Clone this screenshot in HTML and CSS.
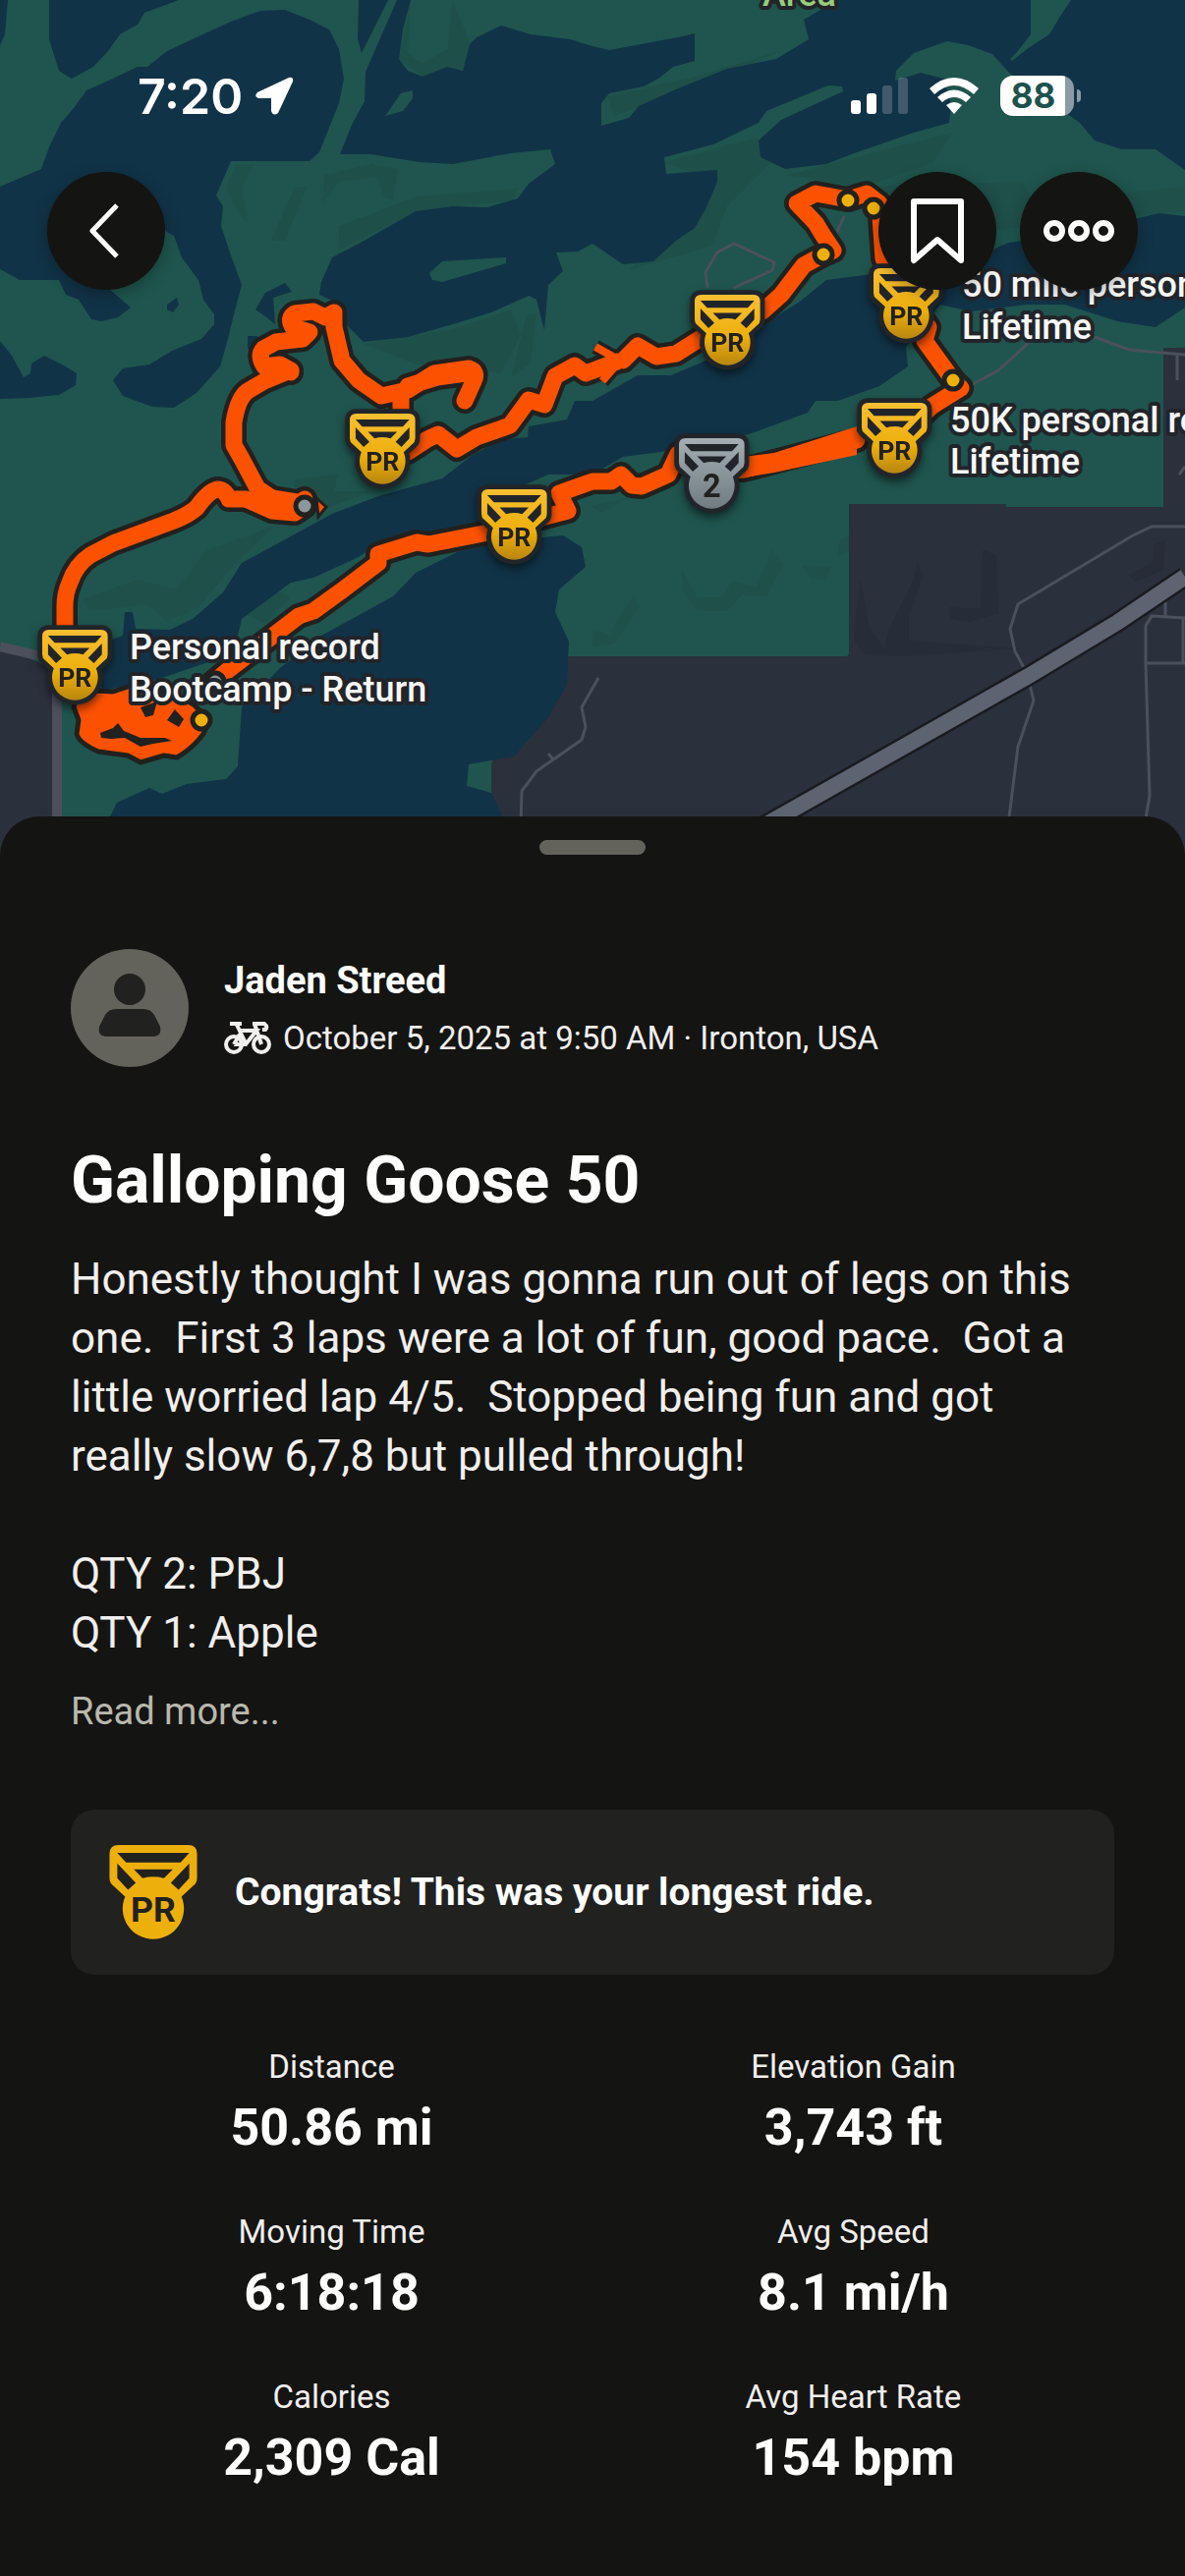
FILE: index.html
```html
<!DOCTYPE html>
<html lang="en">
  <head>
    <meta charset="UTF-8" />
    <meta name="viewport" content="width=device-width, initial-scale=1.0" />
    <title>Galloping Goose 50</title>
    <link rel="stylesheet" href="styles.css">
  </head>
  <body>
    <header class="map">
      <svg class="map-canvas" viewBox="0 0 1206 871" preserveAspectRatio="xMidYMin slice" role="img" aria-label="Ride map">
        <defs>
          <linearGradient id="gold" x1="0" y1="0" x2="0" y2="1">
            <stop offset="0" stop-color="#f8bf33" />
            <stop offset="0.6" stop-color="#edaf0c" />
            <stop offset="1" stop-color="#b9860f" />
          </linearGradient>
          <linearGradient id="silver" x1="0" y1="0" x2="0" y2="1">
            <stop offset="0" stop-color="#a3aeb2" />
            <stop offset="1" stop-color="#717c80" />
          </linearGradient>
          <path id="medal-outline" d="M9 0H81Q90 0 90 9V34Q90 39 86 42L74 53A31.500 31.500 0 1 1 16 53L4 42Q0 39 0 34V9Q0 0 9 0Z" />
          <path id="medal-holes" d="M8 8H82L73 18H17ZM25 25H65L56 34Q45 31 34 34ZM8 19L27 39L19 46L8 34ZM82 19L63 39L71 46L82 34Z" />
        </defs>

        <!-- land -->
        <rect width="1206" height="871" fill="#1f554e" />
        <g class="relief">
          <path d="M418 0L406 60L430 78L471 70L478 42L460 0L456 50L430 64L415 54Z" />
          <path d="M240 168L258 168L246 190L252 228L240 212L230 190ZM300 190L312 190L290 245L276 245ZM330 178L380 166L385 180L345 185L328 208ZM380 168L405 172L400 204L390 200Z" />
          <path d="M345 230L423 200L527 192L520 205L461 210L423 215L345 255Z" />
          <path d="M370 350L461 335L520 315L530 340L510 380L420 370ZM536 320L546 320L540 370L520 385Z" />
          <path d="M618 98L700 80L800 50L690 95L625 118ZM676 165L770 140L790 160L740 210L725 250L640 275L730 185Z" />
          <path d="M800 178L930 145L970 135L950 165L880 190L1040 185L1060 215L1110 200L1206 190L1206 215L1000 235L900 195Z" />
          <path d="M85 610L140 590L180 600L210 560L280 535L240 572L200 620L170 632L150 615L90 622ZM250 625L280 600L295 608L270 635Z" />
          <path d="M300 488L345 482L340 500L380 500L330 518L300 505Z" />
          <path d="M603 515L640 506L612 522ZM603 640L620 646L645 605L650 618L625 655L603 658ZM693 580L710 608L735 608L745 592L770 598L785 560L797 575L780 607L755 605L740 622L710 622L695 602ZM816 575L845 577L840 590L825 590ZM855 550L864 545L864 560L852 568Z" />
        </g>

        <path class="ground" d="M0 658L53 680V871H0ZM500 871V780L520 668H862L864 666V513H1024V516H1184V354H1206V871Z" />
        <g class="ground-relief">
          <path d="M876 590L885 640L900 660L905 640L925 600L934 573L940 586L925 625L925 652L1040 660L920 668L880 666L868 650ZM1000 560L1014 565L1016 625L985 633L968 630L966 618L998 620Z" />
          <path d="M1175 553L1186 550L1184 580L1155 592L1148 585L1172 573Z" />
        </g>

        <!-- water -->
        <g class="water">
          <path d="M0 0H8L5 35L0 46ZM50 0V40L60 72L73 80L95 68L110 52L122 35L140 25L147 13L182 0ZM365 0H395L368 54L364 40Z" />
          <path d="M0 190L42 172L50 150L62 125L75 110L88 92L115 80L140 68H150L170 52L200 38L235 22L265 11L290 10L315 20L335 30L345 50L350 80L345 105L335 130L325 155L315 164H235L220 199L227 210L225 230L235 260L246 290L238 320L232 345L224 373L200 400L177 415L155 414L125 403L115 387L125 375L152 371L175 357L205 345L218 330V320L207 305L202 285L185 262L177 240L168 235L95 280L133 313L120 323L103 327L93 325L80 305L67 300L60 285H20L0 274Z" />
          <path d="M170 310L180 303L182 310L176 318L170 315ZM0 347L12 362L24 384L31 380L32 370L45 362L65 372L78 380L77 392L60 402L30 405L0 406ZM260 315L270 298L290 288L297 297L278 303L280 330L270 322ZM252 342L262 342L262 358L252 355Z" />
          <path d="M418 0L410 30L406 60L415 72L430 78L455 68L471 72L478 45L485 38L510 26L540 35L580 40L603 47L620 51L695 37L707 34V62L685 68L670 80L655 88L620 95L612 105V128L640 120L650 108L690 90L740 70L790 60L823 40L818 20L835 10L850 0H1049V35L1035 53L1028 60L1030 62L1045 50L1068 35L1080 15L1090 0H1206V173L1176 152H1141L1114 143L1099 125L1026 73L1010 55L985 46L964 42L930 54L912 72L911 82L937 74L960 80L968 105L966 125L930 135L872 155L841 167L799 172L774 160L772 143L795 122L858 93L857 88L843 87L780 113L772 125L726 147L676 160L678 177L730 173V185L718 213L707 232L688 245L665 266L634 269L603 248L588 256L566 257L573 276L558 290L554 336L546 305L538 301L500 318L461 330L415 343L370 348L352 330L340 307L325 300L327 287L338 262L365 248L423 215L461 210L496 211L527 202L538 187L565 167L560 152L520 156L461 167L427 165L377 157H346L358 127L371 103L372 73L404 0Z" />
          <path d="M96 657L125 647L127 623H135L138 640L173 641L196 630L227 603L246 573L338 523L385 505L450 487L481 463L511 447L537 445L538 434L577 427L585 408H603L649 382H683L735 360L772 333L814 307L841 285L895 278L957 290L985 265L1026 247L1080 240L1180 217L1206 220V313L1176 333L1137 327L1084 310H1045L988 317L957 310L922 353L924 373L895 393L853 408H830L822 420L795 430L768 440L735 450L672 460L634 465L603 483H558L520 500L480 540L385 553L365 567L319 588L296 593L269 613L246 630L242 647L215 673L165 690L104 703Z" />
          <path d="M465 562L423 583L400 607L327 647L285 680L246 720L242 780L230 793L190 798L165 808L152 802L119 817L112 831V871H511V831L500 807L475 800L477 778L523 770L558 730L577 697L579 653L565 623L569 600L596 577L592 557L573 545L520 550Z" />
        </g>
        <path d="M437 278L450 266L515 262V268L450 287L440 285ZM392 118L408 95L420 92V100L410 113Z" fill="#1f554e" />

        <!-- roads -->
        <g class="road">
          <path d="M1206 536H1172L1153 545L1036 615L1028 640L1033 663L1045 685L1052 713L1036 760L1026 840" />
          <path d="M1186 600V627M1206 629L1172 627L1166 637V675L1170 810L1164 845M1166 675H1206M1204 629V675M1200 483L1206 475" />
          <path d="M609 690L592 720L596 740L592 753L546 785L531 805L530 840M558 767L563 773" />
          <path d="M720 293L718 277L730 257L747 248L788 267L786 275L747 293M849 243L859 220M988 392L1016 377L1049 347M1114 343L1149 356L1206 361M1198 362V387" />
        </g>
        <path class="street" d="M58 871V700M0 658L50 670" />
        <path class="highway-edge" d="M1206 587L1138 633L1045 689L729 868" />
        <path class="highway" d="M1206 587L1138 633L1045 689L729 868" />

        <!-- ride track: dark casing under the orange line -->
        <defs>
          <g id="track">
            <path d="M66 640V617Q66 604 71 593Q77 575 92 565L115 553L177 530Q192 524 200 517Q212 500 221 498Q229 498 233 508H250L277 520L300 522L310 515" />
            <path d="M308 512L277 507L262 497L246 467L238 453V430Q242 405 252 398L269 388L296 377L285 371L269 373Q262 362 268 355L281 348L308 345L315 338L298 333Q292 324 300 319L319 317L331 323L340 318V333L348 367L365 387L388 403L415 397L442 380L477 375Q487 378 482 388L473 408" />
            <path d="M415 393L445 384L474 380M408 405V430M296 379L280 374" />
            <path d="M415 460L435 447L446 442L465 457L485 445L519 433L538 407L554 412L565 383L585 372L596 380L628 368M634 367L649 352L668 363L688 360L715 343L776 317L795 300L818 270L838 259L848 255L838 240L830 227L811 207L830 197L863 203L882 197L895 207L899 263L920 300L945 333L941 347L970 387L978 395L949 413L920 440" />
            <path d="M872 448L788 470L757 478L725 475L690 462L680 483L653 495L643 494L632 483L622 490H603L569 502L578 520L520 535L492 543L436 554L424 552L385 564V573L348 601L319 622L304 627L231 683L205 705" />
            <path d="M310 508L300 520L282 516" />
          </g>
          <path id="direction" d="M613 388L631 367L606 353" />
        </defs>
        <use href="#track" class="track-casing" />
        <use href="#direction" class="arrow-casing" />
        <path d="M80 702L115 704L133 698L180 708L197 717L213 733L207 747Q196 762 180 771L167 769L143 776L130 769L100 765Q80 756 78 747L80 733L75 720Z" fill="#fc5200" stroke="#21211f" stroke-width="5" stroke-linejoin="round" />
        <use href="#track" class="track" />
        <use href="#direction" class="arrow" />
        <path d="M748 466L788 461L872 434V463L788 481L752 487Z" fill="#fc5200" />
        <path d="M102 746L115 741L120 736L126 744L143 751L168 751L175 754L156 757L143 760L127 751L113 752L103 751ZM143 720L160 714L156 728L148 730ZM170 733L178 722L187 732L182 740Z" fill="#21211f" />
        <path d="M322 507L332 516L324 526Z" fill="#fc5200" stroke="#21211f" stroke-width="3" />

        <!-- segment ends -->
        <g class="spot">
          <circle cx="838" cy="259" r="9" />
          <circle cx="863" cy="204" r="9" />
          <circle cx="889" cy="212" r="9" />
          <circle cx="970" cy="387" r="9" />
          <circle cx="205" cy="733" r="9" />
          <circle class="spot-silver" cx="310" cy="515" r="9" />
          <circle class="spot-silver" cx="219" cy="694" r="9" />
        </g>

        <!-- medals -->
        <g id="pin-gold" class="pin" transform="translate(707 300) scale(0.740)">
          <use href="#medal-outline" class="pin-casing" />
          <use href="#medal-outline" fill="url(#gold)" />
          <use href="#medal-holes" fill="#21252a" />
          <text class="pin-text" x="45" y="79">PR</text>
        </g>
        <use href="#pin-gold" x="182" y="-27" />
        <use href="#pin-gold" x="170" y="110" />
        <use href="#pin-gold" x="-351" y="121" />
        <use href="#pin-gold" x="-217" y="198" />
        <use href="#pin-gold" x="-664" y="341" />
        <g class="pin" transform="translate(691 446) scale(0.740)">
          <use href="#medal-outline" class="pin-casing" />
          <use href="#medal-outline" fill="url(#silver)" />
          <use href="#medal-holes" fill="#21252a" />
          <text class="pin-text pin-number" x="45" y="81">2</text>
        </g>

        <!-- labels -->
        <text class="place" x="776" y="6">Area</text>
        <g class="label">
          <text x="132" y="671">Personal record</text>
          <text x="132" y="714">Bootcamp - Return</text>
          <text x="979" y="302">50 mile personal record</text>
          <text x="979" y="345">Lifetime</text>
          <text x="967" y="440">50K personal record</text>
          <text x="967" y="482">Lifetime</text>
        </g>
      </svg>

      <div class="map-overlay">
        <div class="status-bar">
          <div class="status-group">
            <span class="clock">7:20</span>
            <svg width="40" height="40" viewBox="0 0 40 40"><path d="M35 1L3 16Q-1 20 4 22H17V35Q19 41 24 37L39 5Q40 0 35 1Z" fill="#fff" /></svg>
          </div>
          <div class="status-group status-right">
            <svg width="58" height="37" viewBox="0 0 58 37" fill="#fff">
              <rect y="23" width="10" height="14" rx="3" />
              <rect x="16" y="16" width="10" height="21" rx="3" />
              <rect x="32" y="8" width="10" height="29" rx="3" opacity="0.2" />
              <rect x="48" width="10" height="37" rx="3" opacity="0.2" />
            </svg>
            <svg width="50" height="37" viewBox="0 0 50 37" fill="#fff">
              <path d="M0 11Q25-11 50 11L45 17Q25-1 5 17Z" />
              <path d="M8 20Q25 5 42 20L37 25Q25 15 13 25Z" />
              <path d="M17 28Q25 22 33 28L25 37Z" />
            </svg>
            <div class="battery"><span class="battery-level">88</span></div>
          </div>
        </div>
        <nav class="map-actions">
          <button class="round-button" aria-label="Back">
            <svg width="120" height="120" viewBox="0 0 120 120"><path d="M71 34L46 60L71 86" fill="none" stroke="#fff" stroke-width="5" stroke-linejoin="round" /></svg>
          </button>
          <div class="map-actions-right">
            <button class="round-button" aria-label="Save">
              <svg width="120" height="120" viewBox="0 0 120 120"><path d="M36 30H84V90L60 69L36 90Z" fill="none" stroke="#fff" stroke-width="6" stroke-linejoin="round" /></svg>
            </button>
            <button class="round-button" aria-label="More">
              <svg width="120" height="120" viewBox="0 0 120 120" fill="none" stroke="#fff" stroke-width="6"><circle cx="35" cy="60" r="8" /><circle cx="60" cy="60" r="8" /><circle cx="85" cy="60" r="8" /></svg>
            </button>
          </div>
        </nav>
      </div>
    </header>

    <main class="sheet">
      <div class="handle"></div>

      <div class="athlete">
        <svg class="avatar" viewBox="0 0 120 120" role="img" aria-label="Jaden Streed">
          <circle cx="60" cy="60" r="60" fill="#63625b" />
          <circle cx="60" cy="41" r="16" fill="#21211f" />
          <path d="M46 61H74Q81 61 85 67L91 79Q93 88 85 89H35Q27 88 29 79L35 67Q39 61 46 61Z" fill="#21211f" />
        </svg>
        <div class="athlete-info">
          <div class="athlete-name">Jaden Streed</div>
          <div class="activity-meta">
            <svg width="48" height="34" viewBox="0 0 48 34" fill="none" stroke="#f1efed" stroke-width="4">
              <circle cx="10" cy="23" r="8" />
              <circle cx="38" cy="23" r="8" />
              <path d="M6 2H18M13 3L22 22M10 23H22L33 9H16M10 23L17 11M29 2H41Q45 5 42 8H39M31 2L38 23" />
            </svg>
            <span>October 5, 2025 at 9:50 AM · Ironton, USA</span>
          </div>
        </div>
      </div>

      <h1 class="title">Galloping Goose 50</h1>
      <p class="description">Honestly thought I was gonna run out of legs on this one.  First 3 laps were a lot of fun, good pace.  Got a little worried lap 4/5.  Stopped being fun and got really slow 6,7,8 but pulled through!

QTY 2: PBJ
QTY 1: Apple</p>
      <a class="read-more" href="#">Read more...</a>

      <div class="achievement">
        <svg width="90" height="96" viewBox="0 0 90 97">
          <use href="#medal-outline" fill="#edaf0c" />
          <use href="#medal-holes" fill="#21211f" />
          <text class="pin-text" x="45" y="79">PR</text>
        </svg>
        <span>Congrats! This was your longest ride.</span>
      </div>

      <dl class="stats">
        <div class="stat"><dt>Distance</dt><dd>50.86 mi</dd></div>
        <div class="stat"><dt>Elevation Gain</dt><dd>3,743 ft</dd></div>
        <div class="stat"><dt>Moving Time</dt><dd>6:18:18</dd></div>
        <div class="stat"><dt>Avg Speed</dt><dd>8.1 mi/h</dd></div>
        <div class="stat"><dt>Calories</dt><dd>2,309 Cal</dd></div>
        <div class="stat"><dt>Avg Heart Rate</dt><dd>154 bpm</dd></div>
      </dl>
    </main>
  </body>
</html>
```
FILE: styles.css
```css
* {
  box-sizing: border-box;
}
body {
  margin: 0;
  font-family: Roboto, sans-serif;
  background-color: #141412;
  color: #f1efed;
}

/* Map */
.map {
  position: relative;
  height: 871px;
  overflow: hidden;
}
.map-canvas {
  display: block;
  width: 100%;
  height: 100%;
}
.relief {
  fill: #1f4b45;
  opacity: 0.5;
}
.ground {
  fill: #2b303d;
}
.ground-relief {
  fill: #262b37;
  opacity: 0.7;
}
.water {
  fill: #113347;
}
.road {
  fill: none;
  stroke: #4b505c;
  stroke-width: 3;
}
.street {
  fill: none;
  stroke: #4b505c;
  stroke-width: 10;
}
.highway-edge {
  fill: none;
  stroke: #191b1e;
  stroke-width: 21;
}
.highway {
  fill: none;
  stroke: #5d6370;
  stroke-width: 16;
}
.track,
.track-casing {
  fill: none;
  stroke: #fc5200;
  stroke-width: 17;
  stroke-linejoin: round;
  stroke-linecap: round;
}
.track-casing {
  stroke: #21211f;
  stroke-width: 26;
}
.arrow,
.arrow-casing {
  fill: none;
  stroke: #fc5200;
  stroke-width: 8;
}
.arrow-casing {
  stroke: #21211f;
  stroke-width: 15;
}
.spot circle {
  fill: #edaf0c;
  stroke: #21211f;
  stroke-width: 5;
}
.spot .spot-silver {
  fill: #8c979b;
}
.pin {
  filter: drop-shadow(0 6px 6px rgba(0, 0, 0, 0.5));
}
.pin-casing {
  fill: #21252a;
  stroke: #21252a;
  stroke-width: 13;
  stroke-linejoin: round;
}
.pin-text {
  font-size: 36px;
  font-weight: bold;
  text-anchor: middle;
  fill: #21211f;
}
.pin-number {
  font-size: 44px;
}
.label,
.place {
  font-size: 36px;
  font-weight: 500;
  fill: #f8f8f8;
  stroke: #21252a;
  stroke-width: 8px;
  stroke-linejoin: round;
  paint-order: stroke;
}
.place {
  fill: #98cc7c;
}

/* Status bar and buttons over the map */
.map-overlay {
  position: absolute;
  top: 0;
  left: 0;
  right: 0;
}
.status-bar {
  display: flex;
  justify-content: space-between;
  align-items: center;
  height: 175px;
  padding: 20px 113px 0 140px;
}
.status-group {
  display: flex;
  align-items: center;
  gap: 12px;
}
.status-right {
  gap: 22px;
}
.clock {
  font-family: Inter, sans-serif;
  font-size: 50px;
  font-weight: 600;
  color: #fff;
}
.battery {
  position: relative;
  width: 75px;
  height: 41px;
  padding-right: 8px;
  border-radius: 13px;
  background: linear-gradient(to right, #fff 88%, #8a9ba5 88%);
  text-align: center;
}
.battery::after {
  content: "";
  position: absolute;
  top: 14px;
  right: -7px;
  width: 4px;
  height: 13px;
  border-radius: 0 4px 4px 0;
  background-color: #8a9ba5;
}
.battery-level {
  font-family: Inter, sans-serif;
  font-size: 35px;
  font-weight: bold;
  line-height: 41px;
  color: #1d524d;
}
.map-actions {
  display: flex;
  justify-content: space-between;
  padding: 0 48px;
}
.map-actions-right {
  display: flex;
  gap: 24px;
}
.round-button {
  width: 120px;
  height: 120px;
  padding: 0;
  border: none;
  border-radius: 50%;
  background-color: #141412;
  box-shadow: 0 4px 16px rgba(0, 0, 0, 0.3);
  cursor: pointer;
}
.round-button svg {
  display: block;
}

/* Activity sheet */
.sheet {
  position: relative;
  margin-top: -40px;
  padding: 24px 72px 90px;
  border-radius: 40px 40px 0 0;
  background-color: #141412;
}
.handle {
  width: 108px;
  height: 15px;
  margin: 0 auto 96px;
  border-radius: 8px;
  background-color: #63625b;
}
.athlete {
  display: flex;
  align-items: center;
  gap: 36px;
}
.avatar {
  width: 120px;
  height: 120px;
}
.athlete-info {
  display: flex;
  flex-direction: column;
  gap: 17px;
}
.athlete-name {
  font-size: 38px;
  line-height: 44px;
  font-weight: bold;
  color: #fff;
}
.activity-meta {
  display: flex;
  align-items: center;
  gap: 12px;
  font-size: 33px;
  line-height: 40px;
}
.title {
  margin: 80px 0 34px;
  font-size: 66px;
  line-height: 72px;
  color: #fff;
}
.description {
  margin: 0 0 28px;
  padding-right: 36px;
  font-size: 44px;
  line-height: 60px;
  white-space: pre-wrap;
}
.read-more {
  display: block;
  font-size: 38px;
  line-height: 44px;
  color: #b9b8ae;
  text-decoration: none;
}
.achievement {
  display: flex;
  align-items: center;
  gap: 38px;
  margin-top: 78px;
  padding: 36px 39px;
  border-radius: 24px;
  background-color: #21211f;
  font-size: 39px;
  font-weight: bold;
  color: #fff;
}
.stats {
  display: grid;
  grid-template-columns: 1fr 1fr;
  row-gap: 56px;
  margin: 74px 0 0;
  text-align: center;
}
.stat dt {
  font-size: 33px;
  line-height: 40px;
}
.stat dd {
  margin: 12px 0 0;
  font-size: 52px;
  line-height: 60px;
  font-weight: bold;
  color: #fff;
}
```
